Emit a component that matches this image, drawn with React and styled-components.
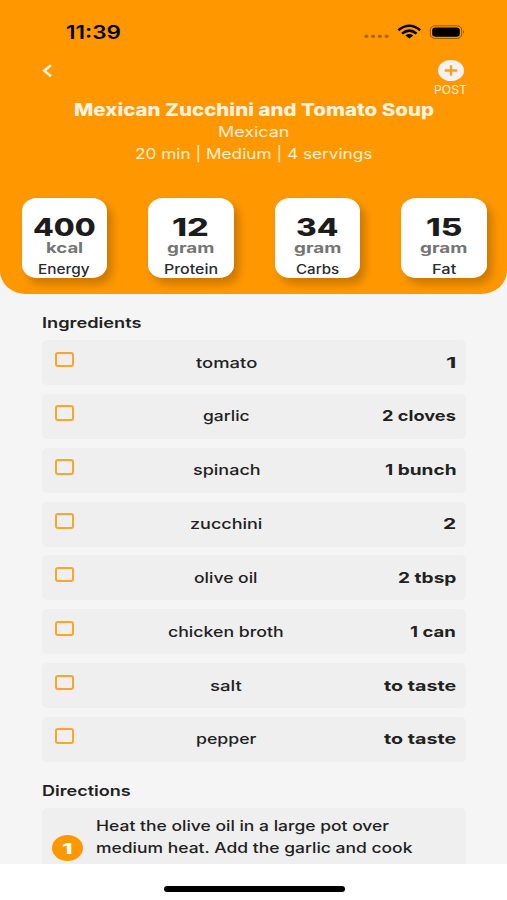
import { useLayoutEffect, useRef, useState } from "react";
import styled, { createGlobalStyle } from "styled-components";

const nutrients = [
  { value: '400', valueWidth: 63, unit: 'kcal', unitWidth: 37, name: 'Energy', nameWidth: 52 },
  { value: '12', valueWidth: 37, unit: 'gram', unitWidth: 47, name: 'Protein', nameWidth: 54 },
  { value: '34', valueWidth: 42, unit: 'gram', unitWidth: 47, name: 'Carbs', nameWidth: 43 },
  { value: '15', valueWidth: 36, unit: 'gram', unitWidth: 47, name: 'Fat', nameWidth: 24 },
]

const ingredients = [
  { name: 'tomato', nameWidth: 61, amount: '1', amountWidth: 10 },
  { name: 'garlic', nameWidth: 47, amount: '2 cloves', amountWidth: 74 },
  { name: 'spinach', nameWidth: 67, amount: '1 bunch', amountWidth: 71 },
  { name: 'zucchini', nameWidth: 72, amount: '2', amountWidth: 13 },
  { name: 'olive oil', nameWidth: 64, amount: '2 tbsp', amountWidth: 58 },
  { name: 'chicken broth', nameWidth: 116, amount: '1 can', amountWidth: 46 },
  { name: 'salt', nameWidth: 32, amount: 'to taste', amountWidth: 72 },
  { name: 'pepper', nameWidth: 61, amount: 'to taste', amountWidth: 72 },
]

const GlobalStyle = createGlobalStyle`
  * {
    box-sizing: border-box;
  }
  body {
    margin: 0;
    background: #f5f5f5;
    font-family: Inter, Roboto, "Liberation Sans", sans-serif;
    color: #212121;
  }
`
const Screen = styled.div`
  width: 507px;
  height: 900px;
  display: flex;
  flex-direction: column;
  overflow: hidden;
  background: #f5f5f5;
`
const WideBox = styled.span`
  display: inline-block;
  flex: none;
  width: ${props => props.$width}px;
  white-space: nowrap;
  text-align: left;
`
const WideInner = styled.span`
  display: inline-block;
  transform-origin: left center;
`
const Header = styled.header`
  flex: none;
  height: 294px;
  border-radius: 0 0 26px 26px / 0 0 23px 23px;
  background: #ff9800;
`
const StatusBar = styled.div`
  display: flex;
  align-items: center;
  justify-content: space-between;
  height: 64px;
  padding: 0 42px 0 66px;
`
const Time = styled.div`
  padding-top: 1px;
  font-size: 18px;
  line-height: 22px;
  font-weight: 600;
  color: #000;
`
const StatusIcons = styled.div`
  display: flex;
  align-items: center;
  svg {
    display: block;
  }
`
const NavBar = styled.div`
  display: flex;
  justify-content: space-between;
  height: 35px;
  padding: 0 40px 0 42px;
`
const BackButton = styled.button`
  height: 14px;
  padding: 0;
  border: none;
  background: none;
  svg {
    display: block;
  }
`
const PostButton = styled.button`
  display: flex;
  flex-direction: column;
  align-items: center;
  margin-top: -4px;
  padding: 0;
  border: none;
  background: none;
  font-family: inherit;
  font-size: 11.5px;
  line-height: 14px;
  color: #f6eee0;
  svg {
    display: block;
    margin-bottom: 2px;
  }
`
const Summary = styled.div`
  display: flex;
  flex-direction: column;
  align-items: center;
  font-size: 14.4px;
  line-height: 22px;
  color: #fdeed5;
`
const RecipeTitle = styled.h1`
  margin: 0;
  font-size: 17px;
  line-height: 22px;
  font-weight: 800;
  color: #fff3e0;
`
const NutrientList = styled.div`
  display: flex;
  justify-content: space-between;
  margin-top: 33px;
  padding: 0 20.5px 0 21.5px;
`
const NutrientCard = styled.div`
  display: flex;
  flex-direction: column;
  align-items: center;
  width: 85.5px;
  height: 79.5px;
  padding-top: 16px;
  border-radius: 15px / 13px;
  background: #fff;
  box-shadow: 5px 6px 9px rgba(90, 50, 0, 0.32);
`
const Value = styled.div`
  font-size: 24px;
  line-height: 27px;
  font-weight: 800;
  color: #1c1c1c;
`
const Unit = styled.div`
  font-size: 14px;
  line-height: 14px;
  font-weight: 700;
  color: #757575;
`
const NutrientName = styled.div`
  margin-top: 5px;
  font-size: 13px;
  line-height: 18px;
  font-weight: 450;
  color: #2b2b2b;
`
const Content = styled.main`
  flex: 1;
  min-height: 0;
  overflow: hidden;
  padding: 18px 41px 0 41.5px;
`
const SectionTitle = styled.h2`
  margin: 0;
  font-size: 14.4px;
  line-height: 22px;
  font-weight: 600;
`
const List = styled.div`
  display: flex;
  flex-direction: column;
  gap: 8.85px;
  margin: 6px 0 18px;
`
const Row = styled.div`
  display: grid;
  grid-template-columns: 1fr auto 1fr;
  align-items: center;
  height: 45px;
  padding: 0 10.5px 0 13px;
  border-radius: 5px;
  background: #efefef;
`
const Checkbox = styled.span`
  align-self: start;
  width: 19px;
  height: 15.5px;
  margin-top: 11.5px;
  border: 2px solid #fba529;
  border-radius: 3px;
`
const Name = styled.div`
  padding-right: 58px;
  font-size: 14.5px;
  line-height: 22px;
  font-weight: 450;
`
const Amount = styled.div`
  justify-self: end;
  font-size: 14.5px;
  line-height: 22px;
  font-weight: 700;
`
const Direction = styled.div`
  display: flex;
  height: 83px;
  padding: 7.5px 10px 0;
  border-radius: 5px;
  background: #efefef;
`
const StepNumber = styled.div`
  display: flex;
  align-items: center;
  justify-content: center;
  width: 31px;
  height: 26px;
  margin: 20px 13px 0 0;
  border-radius: 50%;
  background: #ff9800;
  font-size: 14.4px;
  font-weight: 800;
  color: #fff;
`
const StepText = styled.div`
  display: flex;
  flex-direction: column;
  font-size: 14.5px;
  line-height: 22px;
  font-weight: 450;
`
const HomeArea = styled.footer`
  display: flex;
  flex: none;
  justify-content: center;
  height: 36px;
  padding: 22px 0 0 1px;
  background: #fff;
`
const HomeIndicator = styled.div`
  width: 181px;
  height: 5.5px;
  border-radius: 3px;
  background: #000;
`

// Widens the glyphs so that the text fills the given width
function Wide({ width, children }) {
  const ref = useRef(null)
  const [scale, setScale] = useState(1)

  useLayoutEffect(() => {
    setScale(width / ref.current.offsetWidth)
  }, [width, children])

  return (
    <WideBox $width={width}>
      <WideInner ref={ref} style={{ transform: `scaleX(${scale})` }}>{children}</WideInner>
    </WideBox>
  )
}

function PhoneStatus() {
  return (
    <StatusBar>
      <Time><Wide width={55}>11:39</Wide></Time>
      <StatusIcons>
        <svg width="102" height="18" viewBox="0 0 102 18">
          <g fill="#000" fillOpacity="0.32">
            <ellipse cx="3.3" cy="13.2" rx="2.1" ry="1.8" />
            <ellipse cx="10.1" cy="13.2" rx="2.1" ry="1.8" />
            <ellipse cx="16.9" cy="13.2" rx="2.1" ry="1.8" />
            <ellipse cx="23.7" cy="13.2" rx="2.1" ry="1.8" />
          </g>
          <g fill="none" stroke="#000" strokeWidth="2.5">
            <path d="M35.4 7.2Q46.3-1.7 57.2 7.2" />
            <path d="M39 10.6Q46.3 4.6 53.6 10.6" />
          </g>
          <path d="M42.4 12.4Q46.3 9.6 50.2 12.4L46.3 15.6Z" fill="#000" />
          <rect x="67.3" y="2.8" width="31.4" height="12.6" rx="4.6" ry="4" fill="none" stroke="#000" strokeOpacity="0.42" />
          <rect x="69.2" y="4.4" width="27.6" height="9.4" rx="3.2" ry="2.8" fill="#000" />
          <path d="M100 7.3Q102 9 100 10.8Z" fill="#000" fillOpacity="0.5" />
        </svg>
      </StatusIcons>
    </StatusBar>
  )
}

export default function App() {
  return (
    <>
    <GlobalStyle />
    <Screen>
      <Header>
        <PhoneStatus />
        <NavBar>
          <BackButton aria-label="Back">
            <svg width="11" height="14" viewBox="0 0 11 14" fill="none" stroke="#fff3e0" strokeWidth="2.5">
              <path d="M9 1.2L2.2 6.7L9 12.2" />
            </svg>
          </BackButton>
          <PostButton>
            <svg width="26" height="21" viewBox="0 0 26 21">
              <ellipse cx="13" cy="10.5" rx="13" ry="10.5" fill="#f2f2f2" />
              <path d="M6.7 10.5H19.3M13 5.2V15.8" stroke="#f9a01b" strokeWidth="2.4" />
            </svg>
            <Wide width={33}>POST</Wide>
          </PostButton>
        </NavBar>
        <Summary>
          <RecipeTitle><Wide width={360}>Mexican Zucchini and Tomato Soup</Wide></RecipeTitle>
          <Wide width={71}>Mexican</Wide>
          <Wide width={238}>20 min | Medium | 4 servings</Wide>
        </Summary>
        <NutrientList>
          {nutrients.map(item => (
            <NutrientCard key={item.name}>
              <Value><Wide width={item.valueWidth}>{item.value}</Wide></Value>
              <Unit><Wide width={item.unitWidth}>{item.unit}</Wide></Unit>
              <NutrientName><Wide width={item.nameWidth}>{item.name}</Wide></NutrientName>
            </NutrientCard>
          ))}
        </NutrientList>
      </Header>
      <Content>
        <SectionTitle><Wide width={100}>Ingredients</Wide></SectionTitle>
        <List>
          {ingredients.map(item => (
            <Row key={item.name}>
              <Checkbox />
              <Name><Wide width={item.nameWidth}>{item.name}</Wide></Name>
              <Amount><Wide width={item.amountWidth}>{item.amount}</Wide></Amount>
            </Row>
          ))}
        </List>
        <SectionTitle><Wide width={89}>Directions</Wide></SectionTitle>
        <List>
          <Direction>
            <StepNumber><Wide width={10}>1</Wide></StepNumber>
            <StepText>
              <Wide width={293}>Heat the olive oil in a large pot over</Wide>
              <Wide width={317}>medium heat. Add the garlic and cook</Wide>
            </StepText>
          </Direction>
        </List>
      </Content>
      <HomeArea>
        <HomeIndicator />
      </HomeArea>
    </Screen>
    </>
  )
}
